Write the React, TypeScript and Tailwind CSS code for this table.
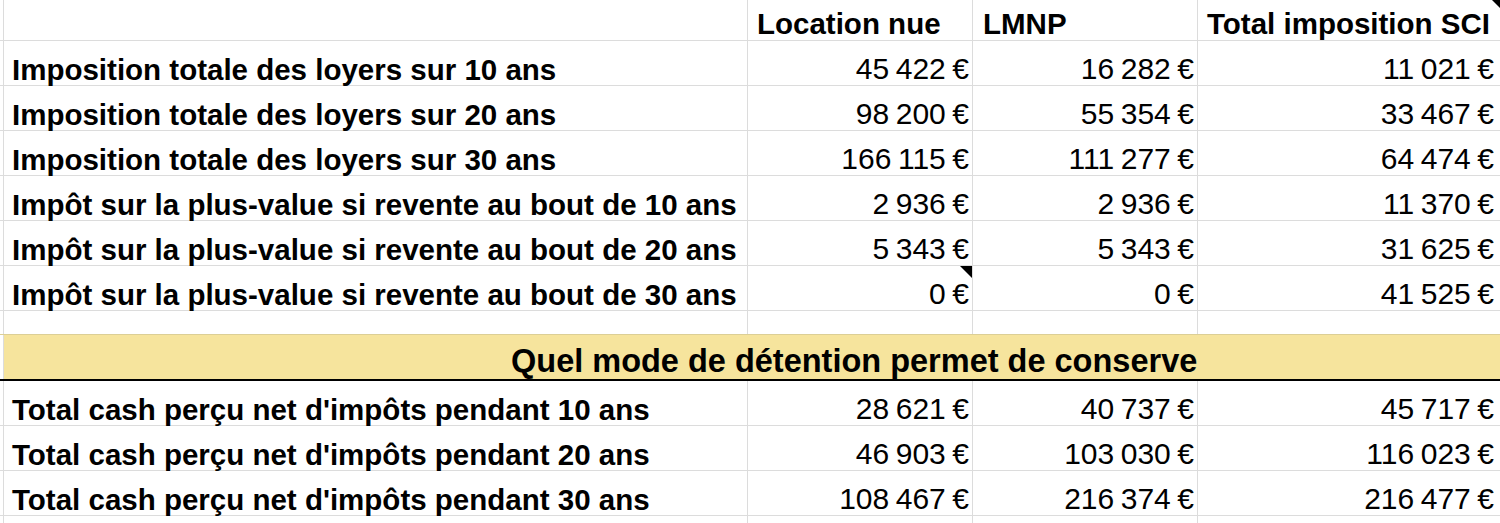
import React from 'react';

const line = 'border-[#dcdcdc]';

const topRows: [string, string, string, string, boolean?][] = [
  ['Imposition totale des loyers sur 10 ans', '45 422 €', '16 282 €', '11 021 €'],
  ['Imposition totale des loyers sur 20 ans', '98 200 €', '55 354 €', '33 467 €'],
  ['Imposition totale des loyers sur 30 ans', '166 115 €', '111 277 €', '64 474 €'],
  ['Impôt sur la plus-value si revente au bout de 10 ans', '2 936 €', '2 936 €', '11 370 €'],
  ['Impôt sur la plus-value si revente au bout de 20 ans', '5 343 €', '5 343 €', '31 625 €'],
  ['Impôt sur la plus-value si revente au bout de 30 ans', '0 €', '0 €', '41 525 €', true],
];

const cashRows: [string, string, string, string][] = [
  ["Total cash perçu net d'impôts pendant 10 ans", '28 621 €', '40 737 €', '45 717 €'],
  ["Total cash perçu net d'impôts pendant 20 ans", '46 903 €', '103 030 €', '116 023 €'],
  ["Total cash perçu net d'impôts pendant 30 ans", '108 467 €', '216 374 €', '216 477 €'],
];

// little black corner = cell has a note
const Note = ({ className = '' }: { className?: string }) => (
  <span
    className={`absolute top-0 w-0 h-0 border-t-[12px] border-t-black border-l-[12px] border-l-transparent ${className}`}
  />
);

const num = 'text-[30px] [word-spacing:-1.8px] flex items-end justify-end pb-[1px]';

const Row = ({
  label,
  b,
  c,
  d,
  note,
}: {
  label: string;
  b: string;
  c: string;
  d: string;
  note?: boolean;
}) => (
  <div className={`flex h-[45px] border-b ${line}`}>
    <div className={`w-[4px] border-r ${line}`} />
    <div className={`w-[744px] border-r ${line} flex items-end pl-[8px] pb-[1px] font-bold`}>
      {label}
    </div>
    <div className={`relative w-[225px] border-r ${line} ${num} pr-[3px]`}>
      {b}
      {note && <Note className="right-0" />}
    </div>
    <div className={`w-[225px] border-r ${line} ${num} pr-[3px]`}>{c}</div>
    <div className={`flex-1 ${num} pr-[6px]`}>{d}</div>
  </div>
);

const EmptyRow = ({ h, border = line }: { h: string; border?: string }) => (
  <div className={`flex ${h} border-b ${border}`}>
    <div className={`w-[4px] border-r ${line}`} />
    <div className={`w-[744px] border-r ${line}`} />
    <div className={`w-[225px] border-r ${line}`} />
    <div className={`w-[225px] border-r ${line}`} />
    <div className="flex-1" />
  </div>
);

export default function App() {
  return (
    <div className="w-[1500px] h-[523px] overflow-hidden bg-white text-black text-[29.5px] leading-none font-['Liberation_Sans',Arial,sans-serif]">
      {/* header */}
      <div className={`flex h-[41px] border-b ${line} font-bold`}>
        <div className={`w-[4px] border-r ${line}`} />
        <div className={`w-[744px] border-r ${line}`} />
        <div className={`w-[225px] border-r ${line} flex items-end pl-[9px] pb-[2px]`}>Location nue</div>
        <div className={`w-[225px] border-r ${line} flex items-end pl-[10px] pb-[2px]`}>LMNP</div>
        <div className="relative flex-1 flex items-end pl-[9px] pb-[2px] whitespace-nowrap">
          Total imposition SCI
          <Note className="right-[-4px]" />
        </div>
      </div>

      {topRows.map(([label, b, c, d, note]) => (
        <Row key={label} label={label} b={b} c={c} d={d} note={note} />
      ))}

      <EmptyRow h="h-[24px]" border="border-[#dccf96]" />

      {/* section title */}
      <div className="flex h-[46px] border-b-2 border-black">
        <div className={`w-[4px] border-r ${line}`} />
        <div className="flex-1 bg-[#f6e49d] flex items-end pl-[507px] pb-[2px] text-[32.5px] font-bold whitespace-nowrap overflow-hidden">
          Quel mode de détention permet de conserve
        </div>
      </div>

      {cashRows.map(([label, b, c, d]) => (
        <Row key={label} label={label} b={b} c={c} d={d} />
      ))}

      <EmptyRow h="h-[45px]" />
    </div>
  );
}
